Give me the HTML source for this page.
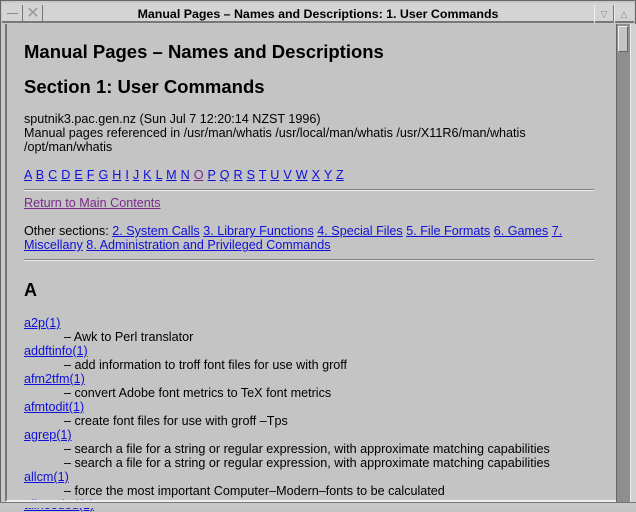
<!DOCTYPE html>
<html><head><style>
body{margin:0;width:636px;height:507px;background:#c4c4c4;position:relative;overflow:hidden;font-family:"Liberation Sans",sans-serif;}
.a{position:absolute;white-space:nowrap;font-size:12.6px;line-height:14px;color:#000;}
a{color:#1010d8;text-decoration:underline;}
a.v{color:#7a2a8a;}
.h{position:absolute;font-weight:bold;font-size:18.5px;white-space:nowrap;}
.hr{position:absolute;left:24px;width:570px;height:0;border-top:1px solid #808080;border-bottom:1px solid #eee;}
</style></head><body>
<div style="position:absolute;left:0;top:0;width:636px;height:507px;border:1px solid #666;box-sizing:border-box;background:#c8c8c8"></div>
<div style="position:absolute;left:2px;top:3px;width:632px;height:20px;background:#d4d4d4;border-bottom:2px solid #777;box-sizing:border-box"></div>
<div style="position:absolute;left:2px;top:5px;width:20px;height:18px;border-right:1px solid #777;"></div>
<div style="position:absolute;left:7px;top:13px;width:11px;height:1px;background:#888"></div>
<div style="position:absolute;left:24px;top:5px;width:18px;height:18px;border-right:1px solid #777;font-size:16px;line-height:18px;color:#999;text-align:center">✕</div>
<div style="position:absolute;left:594px;top:5px;width:18px;height:18px;border-left:1px solid #eee;border-right:1px solid #777;font-size:9px;line-height:18px;color:#888;text-align:center">▽</div>
<div style="position:absolute;left:614px;top:5px;width:18px;height:18px;border-left:1px solid #eee;font-size:9px;line-height:18px;color:#888;text-align:center">△</div>
<div class="a" style="left:0;width:636px;text-align:center;top:7px;font-weight:bold;font-size:12.4px">Manual Pages – Names and Descriptions: 1. User Commands</div>
<div style="position:absolute;left:5px;top:24px;width:611px;height:478px;background:#c4c4c4;border-left:2px solid #777;border-bottom:2px solid #eee;box-sizing:border-box"></div>
<div style="position:absolute;left:616px;top:24px;width:14px;height:478px;background:#8e8e8e;border-left:1px solid #666"></div>
<div style="position:absolute;left:618px;top:26px;width:10px;height:26px;background:#c4c4c4;border:1px solid #eee;border-right-color:#666;border-bottom-color:#666;box-sizing:border-box"></div>
<div style="position:absolute;left:630px;top:24px;width:5px;height:478px;background:#d0d0d0;border-left:1px solid #eee"></div>

<div class="h" style="left:24px;top:41px">Manual Pages – Names and Descriptions</div>
<div class="h" style="left:24px;top:76px">Section 1: User Commands</div>
<div class="a" style="left:24px;top:112px">sputnik3.pac.gen.nz (Sun Jul 7 12:20:14 NZST 1996)<br>Manual pages referenced in /usr/man/whatis /usr/local/man/whatis /usr/X11R6/man/whatis<br>/opt/man/whatis</div>
<div class="a" style="left:24px;top:168px;word-spacing:0.5px"><a>A</a> <a>B</a> <a>C</a> <a>D</a> <a>E</a> <a>F</a> <a>G</a> <a>H</a> <a>I</a> <a>J</a> <a>K</a> <a>L</a> <a>M</a> <a>N</a> <a class="v">O</a> <a>P</a> <a>Q</a> <a>R</a> <a>S</a> <a>T</a> <a>U</a> <a>V</a> <a>W</a> <a>X</a> <a>Y</a> <a>Z</a></div>
<div class="hr" style="top:189px"></div>
<div class="a" style="left:24px;top:196px"><a class="v">Return to Main Contents</a></div>
<div class="a" style="left:24px;top:224px">Other sections: <a>2. System Calls</a> <a>3. Library Functions</a> <a>4. Special Files</a> <a>5. File Formats</a> <a>6. Games</a> <a>7.</a><br><a>Miscellany</a> <a>8. Administration and Privileged Commands</a></div>
<div class="hr" style="top:259px"></div>
<div class="h" style="left:24px;top:280px;font-size:18px">A</div>
<div class="a" style="left:24px;top:316px"><a>a2p(1)</a></div>
<div class="a" style="left:64px;top:330px">– Awk to Perl translator</div>
<div class="a" style="left:24px;top:344px"><a>addftinfo(1)</a></div>
<div class="a" style="left:64px;top:358px">– add information to troff font files for use with groff</div>
<div class="a" style="left:24px;top:372px"><a>afm2tfm(1)</a></div>
<div class="a" style="left:64px;top:386px">– convert Adobe font metrics to TeX font metrics</div>
<div class="a" style="left:24px;top:400px"><a>afmtodit(1)</a></div>
<div class="a" style="left:64px;top:414px">– create font files for use with groff –Tps</div>
<div class="a" style="left:24px;top:428px"><a>agrep(1)</a></div>
<div class="a" style="left:64px;top:442px">– search a file for a string or regular expression, with approximate matching capabilities</div>
<div class="a" style="left:64px;top:456px">– search a file for a string or regular expression, with approximate matching capabilities</div>
<div class="a" style="left:24px;top:470px"><a>allcm(1)</a></div>
<div class="a" style="left:64px;top:484px">– force the most important Computer–Modern–fonts to be calculated</div>
<div class="a" style="left:24px;top:498px"><a>allneeded(1)</a></div>
<div style="position:absolute;left:7px;top:500px;width:609px;height:2px;background:#eee"></div>
<div style="position:absolute;left:0;top:502px;width:636px;height:5px;background:#c8c8c8;border-top:1px solid #777"></div>
</body></html>
